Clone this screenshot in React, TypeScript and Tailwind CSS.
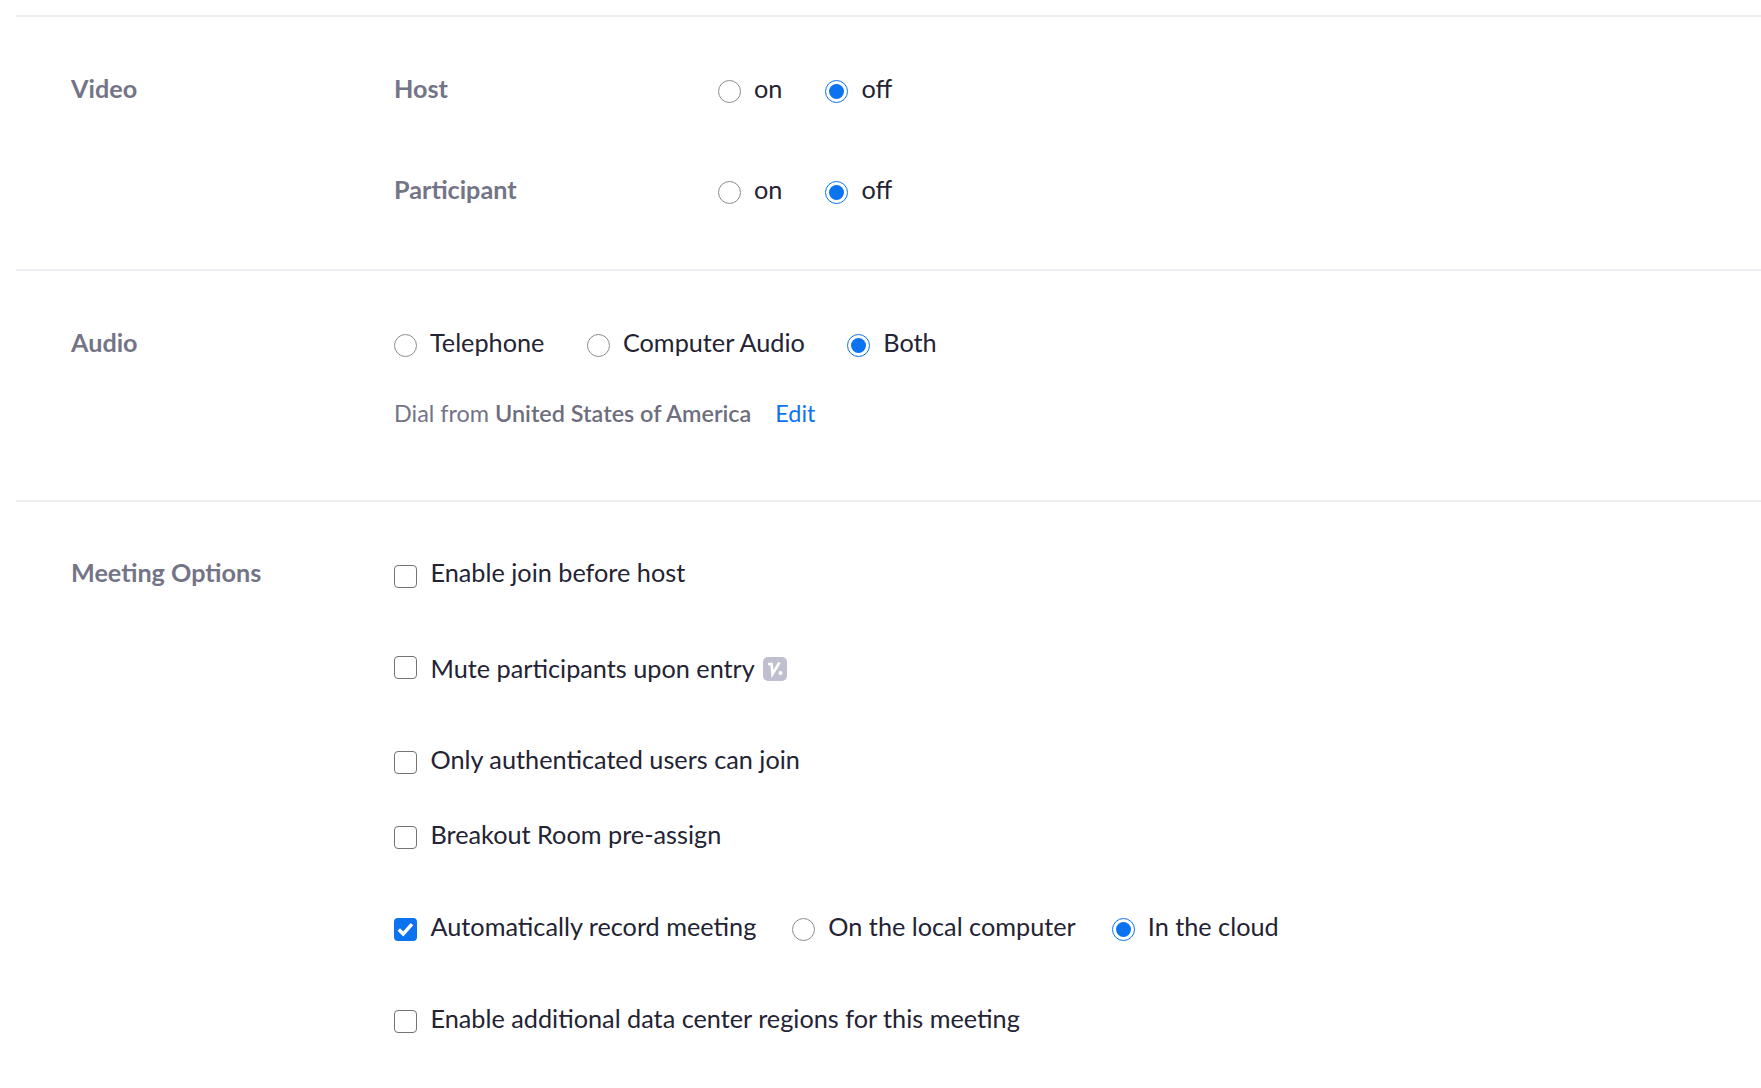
const labelCls = 'shrink-0 text-[25.2px] leading-[32px] font-bold text-[#747487]'
const textCls = 'text-[25.25px] leading-[32px] text-[#232333]'

function Radio({ checked = false }: { checked?: boolean }) {
  return (
    <span
      className={`mt-[7.5px] flex h-[23px] w-[23px] shrink-0 items-center justify-center rounded-full border bg-white ${
        checked ? 'border-[#0b72f0]' : 'border-[#8b8b8b]'
      }`}
    >
      {checked && <span className="h-[15px] w-[15px] rounded-full bg-[#0b72f0]" />}
    </span>
  )
}

function Checkbox({ checked = false, className = 'mt-[7.5px]' }: { checked?: boolean; className?: string }) {
  if (checked) {
    return (
      <span className={`flex h-[23px] w-[23px] shrink-0 items-center justify-center rounded-[4px] bg-[#0b72f0] ${className}`}>
        <svg width="17" height="15" viewBox="0 0 17 15" fill="none">
          <path d="M1.8 7.5L6.2 12L15 2.2" stroke="#fff" strokeWidth="3.4" />
        </svg>
      </span>
    )
  }
  return <span className={`block h-[23px] w-[23px] shrink-0 rounded-[4px] border border-[#747474] bg-white ${className}`} />
}

function RadioItem({ label, checked }: { label: string; checked?: boolean }) {
  return (
    <label className="flex items-start gap-[13px]">
      <Radio checked={checked} />
      <span className={textCls}>{label}</span>
    </label>
  )
}

function CheckItem({ label, checked, boxClass }: { label: string; checked?: boolean; boxClass?: string }) {
  return (
    <label className="flex items-start gap-[13.5px]">
      <Checkbox checked={checked} className={boxClass} />
      <span className={textCls}>{label}</span>
    </label>
  )
}

function OnOffRow({ label, className }: { label: string; className?: string }) {
  return (
    <div className={`flex items-start ${className ?? ''}`}>
      <div className={`${labelCls} w-[324px]`}>{label}</div>
      <div className="flex items-start gap-[43px]">
        <RadioItem label="on" />
        <RadioItem label="off" checked />
      </div>
    </div>
  )
}

export default function App() {
  return (
    <div className="h-[1088px] overflow-hidden bg-white pt-[15px] pl-[16px] font-['Lato','Noto_Sans',sans-serif]">
      {/* Video */}
      <section className="flex h-[254px] border-t-2 border-[#ededf4] pt-[55px] pl-[55px]">
        <div className={`${labelCls} w-[323px]`}>Video</div>
        <div>
          <OnOffRow label="Host" />
          <OnOffRow label="Participant" className="mt-[69px]" />
        </div>
      </section>

      {/* Audio */}
      <section className="flex h-[231px] border-t-2 border-[#ededf4] pt-[55px] pl-[55px]">
        <div className={`${labelCls} w-[323px]`}>Audio</div>
        <div>
          <div className="flex items-start gap-[42.5px]">
            <RadioItem label="Telephone" />
            <RadioItem label="Computer Audio" />
            <RadioItem label="Both" checked />
          </div>
          <div className="mt-[39px] flex text-[23.4px] leading-[32px] text-[#747487]">
            <span>Dial from</span>
            <span className="ml-[6px] font-semibold text-[#6e6e7e]">United States of America</span>
            <a className="ml-[24px] text-[#0b72f0]">Edit</a>
          </div>
        </div>
      </section>

      {/* Meeting Options */}
      <section className="flex border-t-2 border-[#ededf4] pt-[54px] pl-[55px]">
        <div className={`${labelCls} w-[323px]`}>Meeting Options</div>
        <div>
          <CheckItem label="Enable join before host" boxClass="mt-[8.5px]" />
          <div className="mt-[64px] flex items-start gap-[8px]">
            <CheckItem label="Mute participants upon entry" boxClass="mt-[3.5px]" />
            <span className="mt-[5px] flex h-[24px] w-[24px] items-center justify-center rounded-[5px] bg-[#bfbfd0]">
              <svg width="20" height="18" viewBox="0 0 20 18" fill="none">
                <path d="M3 4H6.5L7.5 14L14.5 2.5" stroke="#fff" strokeWidth="2.6" />
                <circle cx="15.5" cy="13" r="2" fill="#fff" />
              </svg>
            </span>
          </div>
          <div className="mt-[59px]">
            <CheckItem label="Only authenticated users can join" boxClass="mt-[7.5px]" />
          </div>
          <div className="mt-[43px]">
            <CheckItem label="Breakout Room pre-assign" boxClass="mt-[7.5px]" />
          </div>
          <div className="mt-[60px] flex items-start gap-[36px]">
            <CheckItem label="Automatically record meeting" checked boxClass="mt-[7.5px]" />
            <RadioItem label="On the local computer" />
            <RadioItem label="In the cloud" checked />
          </div>
          <div className="mt-[60px]">
            <CheckItem label="Enable additional data center regions for this meeting" boxClass="mt-[7.5px]" />
          </div>
        </div>
      </section>
    </div>
  )
}
